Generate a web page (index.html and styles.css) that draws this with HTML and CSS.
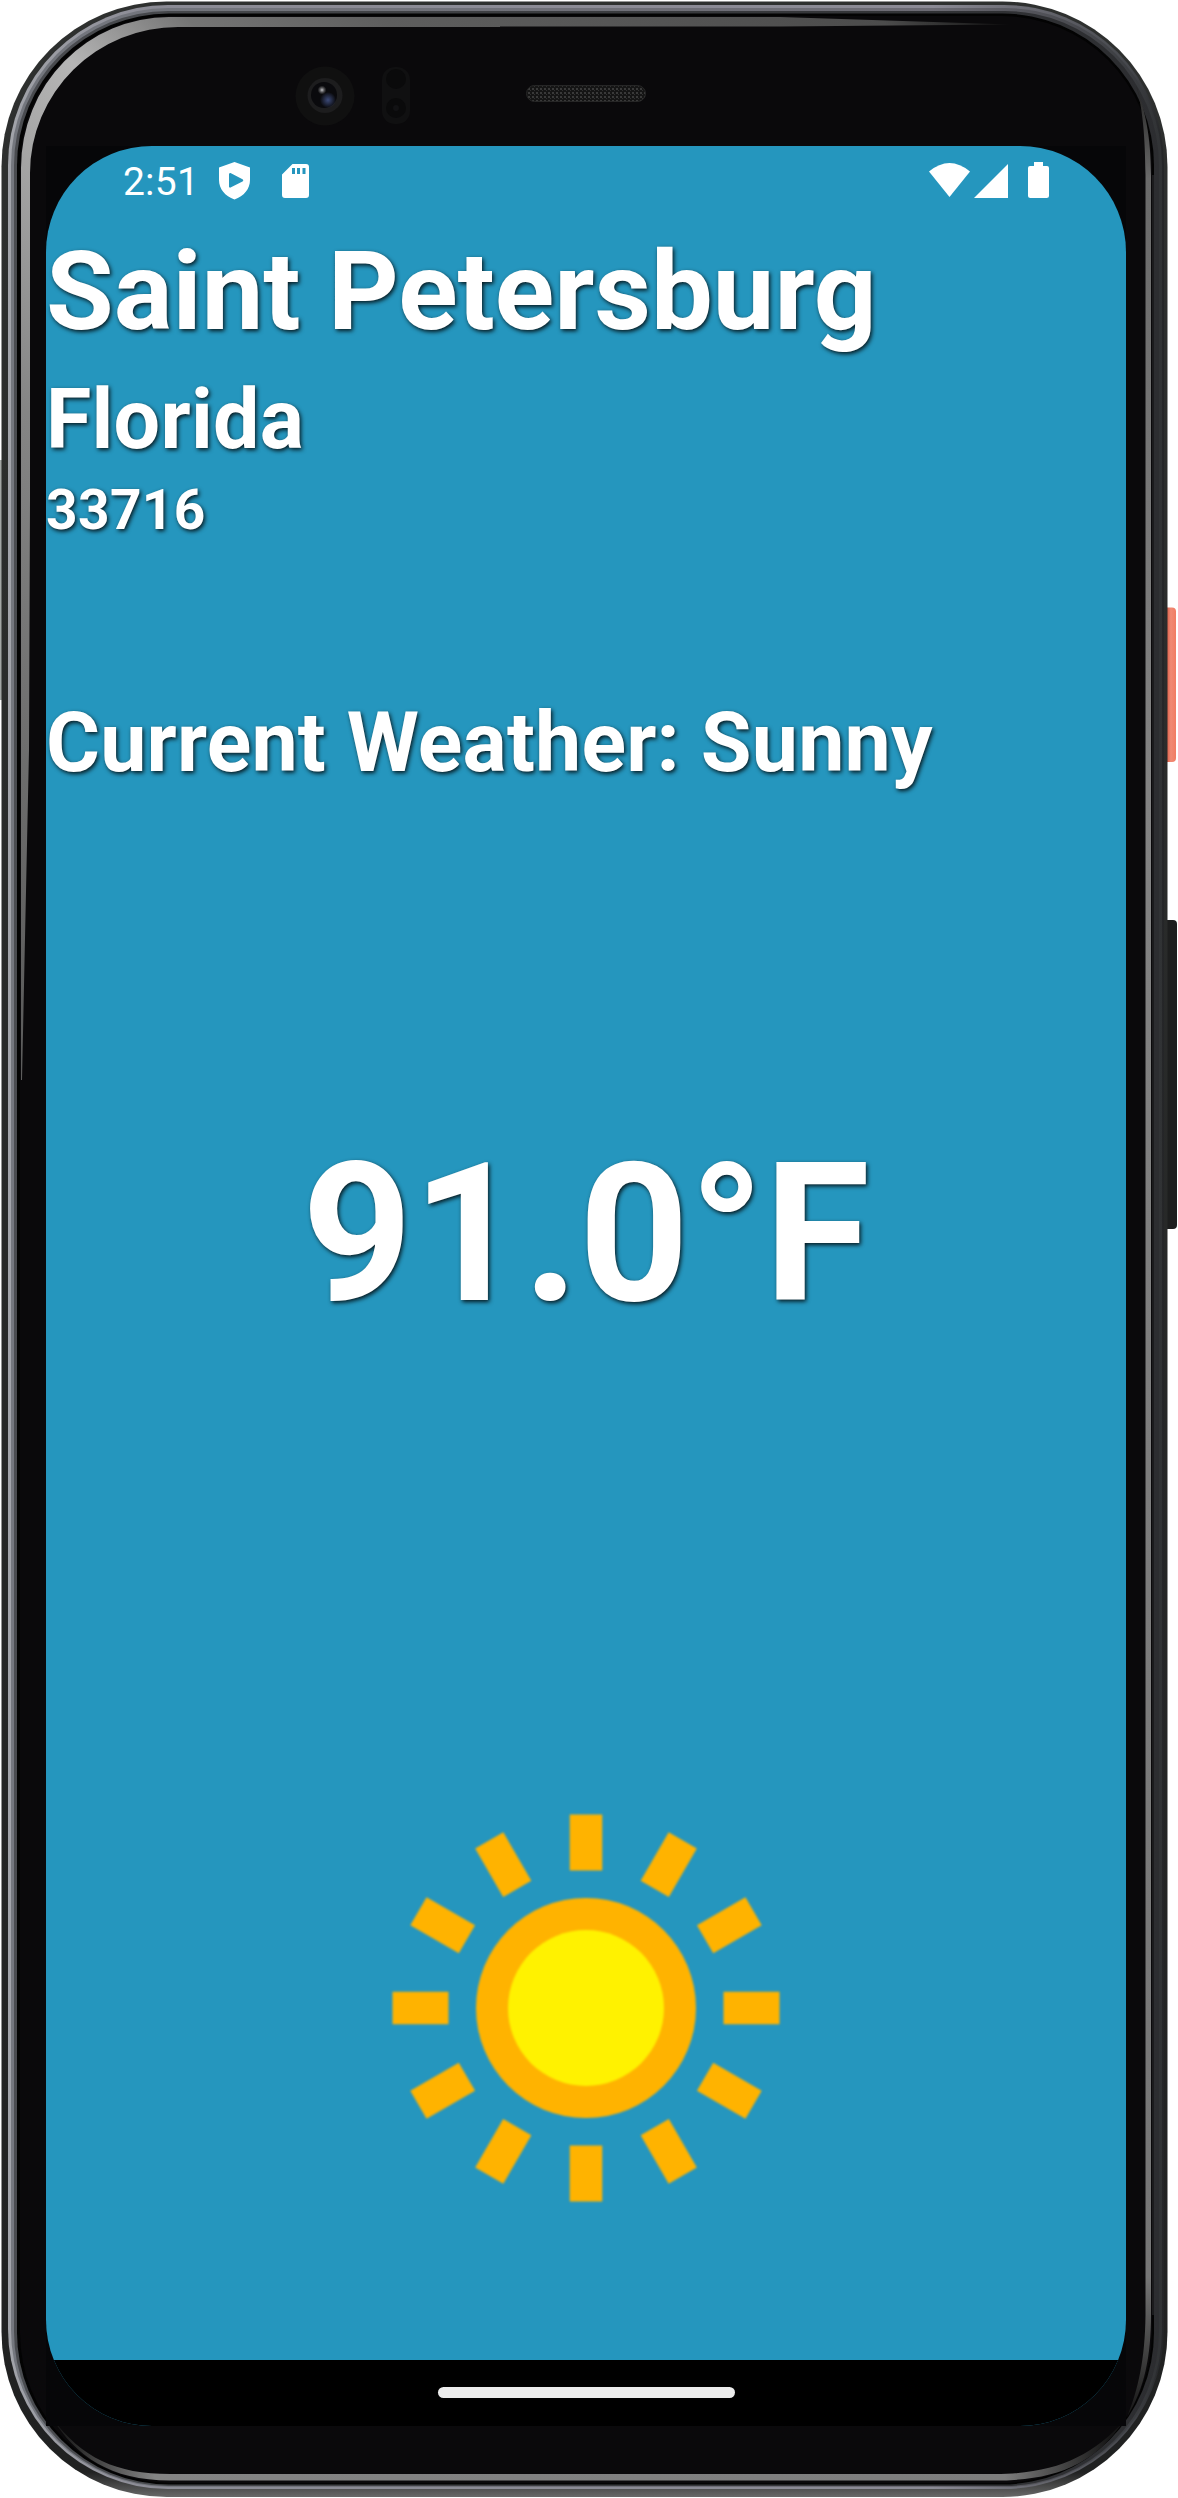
FILE: index.html
```html
<!DOCTYPE html>
<html lang="en">
<head>
<meta charset="utf-8">
<title>Weather</title>
<link rel="stylesheet" href="styles.css">
</head>
<body>
<div class="phone">
  <svg class="shell" viewBox="0 0 1178 2498" aria-hidden="true">
    <defs>
      <linearGradient id="rim1" x1="0" x2="1" y1="0" y2="0"><stop offset="0" stop-color="#a2a4aa"/><stop offset=".12" stop-color="#8b8b95"/><stop offset=".8" stop-color="#8b8a95"/><stop offset=".97" stop-color="#45474c"/><stop offset="1" stop-color="#242527"/></linearGradient>
      <linearGradient id="rim2" x1="0" x2="1" y1="0" y2="0"><stop offset="0" stop-color="#74777e"/><stop offset=".8" stop-color="#6c6b74"/><stop offset=".97" stop-color="#3c3e42"/><stop offset="1" stop-color="#303234"/></linearGradient>
      <linearGradient id="rim3" x1="0" x2="1" y1="0" y2="0"><stop offset="0" stop-color="#4a4c50"/><stop offset="1" stop-color="#2c2d30"/></linearGradient>
      <linearGradient id="glass" gradientUnits="userSpaceOnUse" x1="20" y1="1000" x2="1010" y2="10"><stop offset="0" stop-color="#5d5d5d"/><stop offset=".3" stop-color="#858585"/><stop offset=".43" stop-color="#a5a5a5"/><stop offset=".5" stop-color="#b5b5b5"/><stop offset=".58" stop-color="#757575"/><stop offset=".68" stop-color="#5e5e5e"/><stop offset=".93" stop-color="#4c4c4c"/><stop offset="1" stop-color="#0a0a0a"/></linearGradient>
      <linearGradient id="low" gradientUnits="userSpaceOnUse" x1="60" x2="1110" y1="0" y2="0"><stop offset="0" stop-color="#1a1a1a"/><stop offset=".09" stop-color="#848484"/><stop offset=".9" stop-color="#7d7d7d"/><stop offset="1" stop-color="#161616"/></linearGradient>
      <linearGradient id="side" x1="0" x2="0" y1="0" y2="1"><stop offset="0" stop-color="#222"/><stop offset=".04" stop-color="#6a6a6a"/><stop offset=".3" stop-color="#838383"/><stop offset=".94" stop-color="#767676"/><stop offset="1" stop-color="#151515"/></linearGradient>
      <linearGradient id="power" x1="0" x2="1" y1="0" y2="0"><stop offset="0" stop-color="#d94f39"/><stop offset=".35" stop-color="#e06750"/><stop offset=".6" stop-color="#f08a74"/><stop offset="1" stop-color="#f17c63"/></linearGradient>
      <linearGradient id="base" x1="0" x2="0" y1="0" y2="1"><stop offset="0" stop-color="#2e302f"/><stop offset=".99" stop-color="#202121"/><stop offset="1" stop-color="#686868"/></linearGradient>
      <pattern id="mesh" width="4" height="4" patternUnits="userSpaceOnUse"><rect width="4" height="4" fill="#151515"/><rect width="2" height="2" fill="#393939"/><rect x="2" y="2" width="1" height="1" fill="#303030"/></pattern>
      <radialGradient id="blue"><stop offset="0" stop-color="#3c4a78"/><stop offset="1" stop-color="#3c4a78" stop-opacity="0"/></radialGradient>
      <radialGradient id="glint"><stop offset="0" stop-color="#c4c4c8"/><stop offset="1" stop-color="#777" stop-opacity="0"/></radialGradient>
    </defs>
    <rect x="1163" y="607.5" width="13" height="154.500" rx="4" fill="url(#power)"/>
    <rect x="1163" y="920" width="14" height="309" rx="4" fill="#1d1e1e"/>
    <path d="M1 460H3V700H0V460Z" fill="#a2a6a4"/>
    <rect x="1.5" y="1.5" width="1166" height="2495.5" rx="165" fill="url(#base)"/>
    <rect x="8" y="5" width="1156" height="2484" rx="160" fill="url(#rim1)"/>
    <rect x="11" y="8" width="1151" height="2479" rx="157" fill="url(#rim2)"/>
    <rect x="14" y="11" width="1145" height="2475" rx="154" fill="url(#rim3)"/>
    <rect x="17" y="13.5" width="1137" height="2471" rx="152" fill="#030303"/>
    <rect x="20" y="16" width="1132" height="2467" rx="150" fill="#0a090b"/>
    <path d="M21 1080V168A148 151 0 0 1 169 17H780L1010 24.5L780 26.500H500V27H178A148 146 0 0 0 30 173V500L29 750L22 1080Z" fill="url(#glass)"/>
    <path d="M52 2418C82 2458 116 2474 170 2474H995C1055 2474 1092 2456 1123 2422C1094 2465 1055 2480.500 995 2480.500H170C110 2480.500 76 2456 52 2418Z" fill="url(#low)"/>
    <path d="M1136 85C1143 110 1145 136 1145.500 175V2315C1145 2360 1138 2390 1127 2417C1145 2388 1151 2355 1151 2315V175C1151 136 1145 110 1136 85Z" fill="url(#side)"/>
    <rect x="1152.500" y="175" width="1" height="2140" fill="#343538"/>
    <rect x="46" y="146" width="1080" height="2280" fill="#060608"/>
    <circle cx="325" cy="96" r="29.500" fill="#101010"/>
    <circle cx="325" cy="95.500" r="17.500" fill="#1d1d1e"/>
    <circle cx="324" cy="95" r="13" fill="#0a0a0d"/>
    <circle cx="328" cy="100" r="8" fill="url(#blue)"/>
    <circle cx="322" cy="90" r="4.500" fill="url(#glint)"/>
    <rect x="382" y="67" width="28" height="57" rx="13" fill="#101011"/>
    <circle cx="396" cy="79" r="10" fill="#0a0a0b"/><circle cx="396" cy="108" r="10" fill="#0a0a0b"/><circle cx="396" cy="108" r="3" fill="#121214"/>
    <rect x="526.500" y="85.500" width="119" height="16" rx="8" fill="url(#mesh)" stroke="#262626"/>
  </svg>
  <main class="screen">
    <header class="status">
      <span class="clock">2:51</span>
      <svg class="shield" viewBox="0 0 31 38"><path fill-rule="evenodd" d="M15.500 0L31 5.500V18C31 27 25 34 15.500 37.500C6 34 0 27 0 18V5.500ZM11.500 11C10.500 11 10 11.500 10 12.500V24.500C10 25.500 11 26 12 25.300L23.500 19.500C24.500 19 24.500 18 23.500 17.300Z"/></svg>
      <svg class="card" viewBox="0 0 27 34"><path fill-rule="evenodd" d="M10.500 0H24Q27 0 27 3V31Q27 34 24 34H3Q0 34 0 31V10.500ZM10 4V10H13V4ZM15 4V10H18V4ZM20.500 4V10H23.500V4Z"/></svg>
      <span class="fill"></span>
      <svg class="wifi" viewBox="0 0 41 34"><path d="M0 8.500Q20.500-8.500 41 8.500L20.500 34Z"/></svg>
      <svg class="signal" viewBox="0 0 34 34"><path d="M34 0V34H0Z"/></svg>
      <svg class="battery" viewBox="0 0 21 36"><path d="M6 0H15V4H19Q21 4 21 6V33.500Q21 36 18.500 36H2.500Q0 36 0 33.500V6Q0 4 2 4H6Z"/></svg>
    </header>
    <h1 class="city">Saint Petersburg</h1>
    <h2 class="state">Florida</h2>
    <p class="zip">33716</p>
    <h2 class="condition">Current Weather: Sunny</h2>
    <p class="temperature">91.0°F</p>
    <svg class="sun" viewBox="-194 -194 388 388">
      <g stroke="#ffb300" stroke-width="32.500">
        <path d="M0-193.500V-137.500M0 137.500V193.500M-193.500 0H-137.500M137.500 0H193.500"/>
        <path transform="rotate(30)" d="M0-193.500V-137.500M0 137.500V193.500M-193.500 0H-137.500M137.500 0H193.500"/>
        <path transform="rotate(60)" d="M0-193.500V-137.500M0 137.500V193.500M-193.500 0H-137.500M137.500 0H193.500"/>
      </g>
      <circle r="110" fill="#ffb300"/><circle r="78" fill="#fff200"/>
    </svg>
    <footer class="nav"><span class="pill"></span></footer>
  </main>
</div>
</body>
</html>
```
FILE: styles.css
```css
* { box-sizing: border-box; }
body { margin: 0; background: #fff; font-family: Roboto, "Liberation Sans", sans-serif; }
.phone { position: relative; width: 1178px; height: 2498px; padding: 146px 52px 72px 46px; overflow: hidden; }
.shell { position: absolute; left: 0; top: 0; width: 1178px; height: 2498px; }
.screen {
  position: relative;
  display: flex;
  flex-direction: column;
  height: 2280px;
  border-radius: 106px;
  overflow: hidden;
  background: #2596be;
  color: #fff;
}
.status { display: flex; align-items: flex-start; height: 81px; padding: 16px 77px 0 77px; flex: none; }
.status svg { fill: #fff; flex: none; }
.clock { width: 96px; font-size: 39px; line-height: 41px; letter-spacing: .2px; white-space: nowrap; }
.shield { width: 31px; height: 38px; }
.card { width: 27px; height: 34px; margin: 2px 0 0 32px; }
.fill { flex: 1; }
.wifi { width: 41px; height: 34px; margin-top: 1px; }
.signal { width: 34px; height: 34px; margin: 2px 0 0 4px; }
.battery { width: 21px; height: 36px; margin-left: 20px; }
.city, .state, .zip, .condition, .temperature {
  margin: 0;
  flex: none;
  font-weight: 700;
  white-space: nowrap;
  text-shadow: 1.5px 1.5px 4px rgba(0, 0, 0, .85);
}
.city { font-size: 110px; line-height: 129px; }
.state { margin-top: 15px; font-size: 82.5px; line-height: 97px; letter-spacing: .25px; }
.zip { margin-top: 10px; font-size: 55px; line-height: 65px; letter-spacing: .4px; }
.condition { margin-top: 151px; font-size: 82.5px; line-height: 97px; letter-spacing: .2px; }
.temperature { margin-top: 330px; font-size: 192.5px; line-height: 226px; text-align: center; }
.sun { width: 388px; height: 388px; margin-top: 467px; align-self: center; flex: none; filter: blur(1px); }
.nav { display: flex; justify-content: center; height: 66px; margin-top: auto; padding-top: 27px; background: #000; flex: none; }
.pill { width: 297px; height: 11px; border-radius: 6px; background: #ececec; }
```
